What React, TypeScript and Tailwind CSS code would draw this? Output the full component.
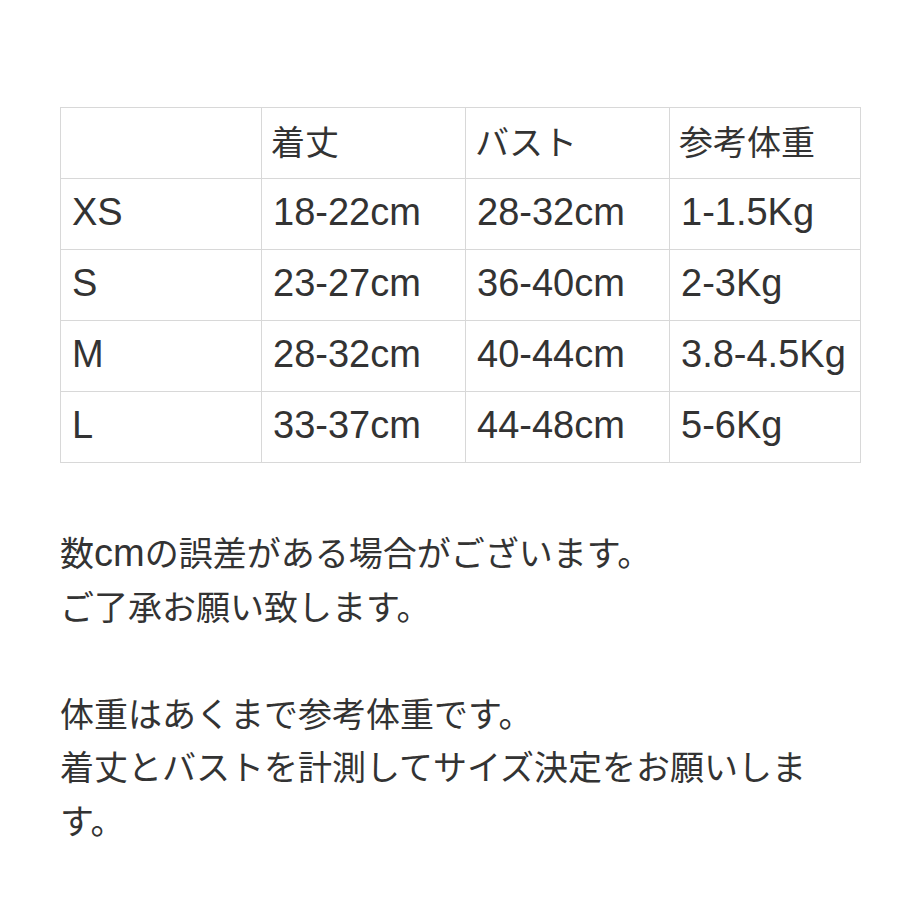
import React from "react";

const rows: [string, string, string, string][] = [
  ["XS", "18-22cm", "28-32cm", "1-1.5Kg"],
  ["S", "23-27cm", "36-40cm", "2-3Kg"],
  ["M", "28-32cm", "40-44cm", "3.8-4.5Kg"],
  ["L", "33-37cm", "44-48cm", "5-6Kg"],
];

const base = "border border-[#d8d8d8] h-[71px] pr-0 py-0 text-left align-middle font-normal whitespace-nowrap";
const head = base + " pl-[9px] text-[34px]";
const cell = base + " pl-[11px] text-[38px]";

export default function App() {
  return (
    <div
      className="w-[920px] min-h-[920px] bg-white text-[#333333] px-[60px] pt-[107px]"
      style={{ fontFamily: '"Liberation Sans", "Noto Sans CJK JP", sans-serif' }}
    >
      <table className="w-[800px] border-collapse table-fixed leading-[53px]">
        <colgroup>
          <col className="w-[201px]" />
          <col className="w-[204px]" />
          <col className="w-[204px]" />
          <col className="w-[191px]" />
        </colgroup>
        <thead>
          <tr>
            <th className={head}></th>
            <th className={head}>着丈</th>
            <th className={head}>バスト</th>
            <th className={head}>参考体重</th>
          </tr>
        </thead>
        <tbody>
          {rows.map((r) => (
            <tr key={r[0]}>
              {r.map((c, i) => (
                <td key={i} className={cell}>
                  <span className="relative top-[-2px]">{c}</span>
                </td>
              ))}
            </tr>
          ))}
        </tbody>
      </table>
      <div className="mt-[65px] w-[800px] text-[34px] leading-[53.5px]">
        <p>
          数<span className="text-[38px] leading-none">cm</span>の誤差がある場合がございます。
        </p>
        <p>ご了承お願い致します。</p>
        <p>&nbsp;</p>
        <p>体重はあくまで参考体重です。</p>
        <p>着丈とバストを計測してサイズ決定をお願いします。</p>
      </div>
    </div>
  );
}
